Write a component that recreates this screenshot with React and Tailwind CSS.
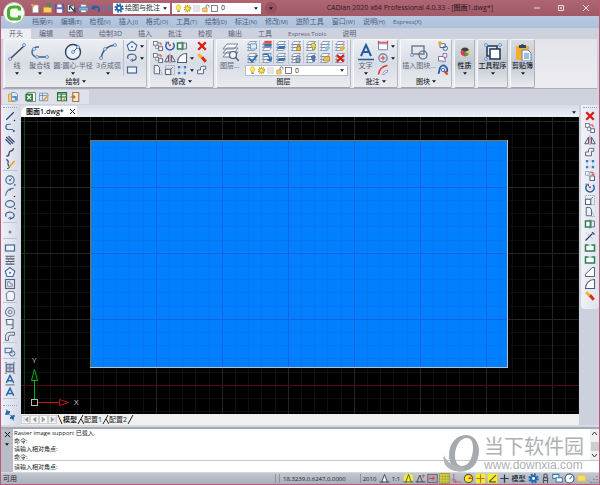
import React from "react";

const S = "#4a6696";
const D = "#30446e";

const ICONS = {
  line: <><path d="M3 13 13 3" stroke={D} strokeWidth="1.600" /><circle cx="14" cy="14" r="1" fill="#222" stroke="none" /></>,
  pline: <><path d="M9 3H6a3.500 3.500 0 0 0 0 7h6" stroke={S} strokeWidth="1.600" /><circle cx="13" cy="12" r="1.400" fill={D} stroke="none" /></>,
  mline: <path d="M3 4l9 9M6 3l8 8M2 7l7 7" stroke={D} strokeWidth="1.500" />,
  spline: <path d="M3 13c5 2 3-5 5-6s3 1 5-4" stroke={D} strokeWidth="1.700" />,
  sketch: <><path d="M3 2c6 2 0 5 3 8s-1 4-2 4" stroke={D} strokeWidth="1.500" /><path d="M7 12 14 4" stroke="#eda22d" strokeWidth="2.500" /></>,
  circle: <><circle cx="8" cy="8" r="5.500" stroke={S} strokeWidth="1.500" /><path d="M8 8l3-3" stroke={S} /><circle cx="8" cy="8" r="1.500" fill="#2f78d0" stroke="none" /><circle cx="14.500" cy="14.500" r="1" fill="#222" stroke="none" /></>,
  arc: <><path d="M2 13C3 7 7 3 13 3" stroke={S} strokeWidth="1.600" /><circle cx="8" cy="5" r="1.300" fill={S} stroke="none" /><circle cx="14" cy="14" r="1" fill="#222" stroke="none" /></>,
  ellipse: <><ellipse cx="8" cy="8" rx="6" ry="4.500" stroke={S} strokeWidth="1.600" /><circle cx="14.500" cy="14" r="1" fill="#222" stroke="none" /></>,
  earc: <><path d="M3 9C0 4 6 2 10 3s5 6 1 8H8" stroke={S} strokeWidth="1.700" /><path d="M9 9l-3 2 3 2" stroke={S} /></>,
  dot: <circle cx="8" cy="8" r="2" fill="#7a86a0" stroke="none" />,
  rect: <rect x="2" y="4" width="12" height="8" stroke={S} strokeWidth="1.600" fill="#eef3fb" />,
  hatch: <><path d="M2 3h12M2 6.500h12M2 10h12M2 13.500h12" stroke="#4e566a" strokeWidth="1.500" /><path d="M4 3v3M9 3v3M6 7v3M12 7v3M4 10v3M9 10v3" stroke="#777" /></>,
  polygon: <><path d="M8 2l6.500 5-2.500 7H4L1.500 7z" stroke={S} strokeWidth="1.400" fill="#edf3fc" /><circle cx="8" cy="9" r="1.300" fill="#2f78d0" stroke="none" /></>,
  region: <><rect x="2" y="2" width="12" height="12" stroke="#5a6680" strokeWidth="1.500" fill="#dde3ee" /><path d="M5 5h3v3h3v3H5z" stroke="#5a6680" fill="#fff" /></>,
  boundary: <path d="M3 5l3-3h6l2 3v6l-2 3H4z" stroke="#7483a0" strokeWidth="1.400" fill="#f4f6fa" />,
  donut: <><circle cx="8" cy="8" r="6" stroke="#6a7690" strokeWidth="1.400" /><circle cx="8" cy="8" r="2.500" stroke="#6a7690" strokeWidth="1.300" /></>,
  trace: <path d="M3 2h9v7H4zM12 9v5H9" stroke="#5f6c86" strokeWidth="1.500" fill="#eef1f7" />,
  fillet3: <path d="M2 14V9q0-6 6-6h6v4H9q-3 0-3 3v4z" stroke="#5f6c86" strokeWidth="1.300" fill="#dce1ea" />,
  block: <><rect x="1.500" y="3" width="9" height="6" stroke={S} strokeWidth="1.300" fill="#e5edf8" /><circle cx="11" cy="10" r="3.500" stroke={S} strokeWidth="1.300" /></>,
  image: <><rect x="3" y="3" width="10" height="10" stroke="#5a6680" strokeWidth="1.600" fill="#b9c3d5" /><path d="M1 1h3M12 1h3M1 15h3M12 15h3M8 3v10M3 8h10" stroke="#5a6680" /></>,
  mtext: <><path d="M3 12 8 2l5 10M5 9h6" stroke="#2c66a8" strokeWidth="2" /><path d="M2 14.500h12" stroke="#444" /></>,
  text: <path d="M3 13 8 3l5 10M5 10h6" stroke="#2c66a8" strokeWidth="2.200" />,
  refresh: <><path d="M3 8q0-4 5-4M13 8q0 4-5 4" stroke="#215fa8" strokeWidth="2.400" /><path d="M2 1v7h6zM14 15V8H8z" fill="#2469b4" transform="rotate(12 8 8)" /></>,
  x: <path d="M3 3l10 10M13 3 3 13" stroke="#e01a12" strokeWidth="3.200" />,
  copy: <><rect x="2" y="2" width="5" height="5" stroke="#66738c" strokeWidth="1.200" fill="#fff" /><path d="M8 4h4v3" stroke="#d83c30" strokeWidth="1.300" /><rect x="5" y="7" width="4" height="4" stroke="#66738c" fill="#fff" /><rect x="9" y="9" width="5" height="5" stroke="#526382" strokeWidth="1.200" fill="#fff" /></>,
  move: <><path d="M2 2h5v5H2z" stroke="#8d99ae" /><path d="M8 3h4v3M10 5l2 2 2-2" stroke="#d83c30" strokeWidth="1.300" /><rect x="8" y="8" width="6" height="6" stroke="#526382" strokeWidth="1.300" fill="#fff" /></>,
  mirror: <><path d="M6 4v9H1zM10 4v9h5z" stroke="#4d5b78" strokeWidth="1.300" fill="#dfe4ee" /><path d="M8 2v13" stroke="#d83c30" /></>,
  offset: <path d="M2 13V8h4V5q0-2 3-2h4v4h-3v6z" stroke="#5b6780" strokeWidth="1.300" fill="#edf0f5" />,
  array: <><path d="M4 4h8v8H4z" stroke="#b8c4d8" /><path d="M2.500 2.500h3v3h-3zM10.500 2.500h3v3h-3zM2.500 10.500h3v3h-3zM10.500 10.500h3v3h-3z" fill="#347bc9" stroke="none" /></>,
  rotate: <><path d="M4 4a5.500 5.500 0 1 0 8 0" stroke="#2b67ac" strokeWidth="2.200" /><path d="M2 3h4v3" stroke="#2b67ac" strokeWidth="1.400" /><circle cx="8" cy="7" r="1.500" fill="#e03a30" stroke="none" /></>,
  scale: <><path d="M2 2h12v12H2z" stroke="#8c99ae" strokeDasharray="2 1" /><rect x="2" y="7" width="7" height="7" stroke="#5b6780" strokeWidth="1.500" fill="#fff" /><path d="M9 7l3-3" stroke="#5b6780" /></>,
  stretch: <><path d="M3 2h5l2 3v8H3z" stroke="#5b6780" strokeWidth="1.300" fill="#eef1f6" /><path d="M11 8l3 6H9" stroke="#8c99ae" strokeDasharray="2 1" /></>,
  lengthen: <><rect x="2" y="4" width="7" height="8" stroke="#2d8050" strokeWidth="2" fill="#fff" /><path d="M8 2v12M9 4h5v8H9" stroke="#66738c" strokeWidth="1.300" /></>,
  trim: <><path d="M2 14 8 8l3-3M11 3l3 3" stroke="#343e56" strokeWidth="1.600" /><path d="M3 4l9 8" stroke="#8c99ae" strokeDasharray="2 1" /></>,
  brk: <><rect x="2" y="4" width="12" height="8" stroke="#2d8050" strokeWidth="2" fill="#fff" /><path d="M6 4h4" stroke="#eef" strokeWidth="2" /></>,
  chamfer: <path d="M2 14V11l9-9h3v12z" stroke="#4d5b78" strokeWidth="1.300" fill="#fff" />,
  fillet: <path d="M2 14C2 7 7 2 14 2v12z" stroke="#4d5b78" strokeWidth="1.400" fill="#fff" />,
  brush: <><path d="M3 3l5 5" stroke="#f2b522" strokeWidth="4" /><path d="M8 7l5 6" stroke="#d92a1c" strokeWidth="4" /></>,
  newf: <><path d="M4 3h8v11H4z" stroke="#a7b0bf" fill="#fff" /><path d="M2 2l4 3" stroke="#f4a21d" strokeWidth="3" /></>,
  open: <><path d="M2 6h12v8H2z" stroke="#c38a1c" fill="#f7cf68" /><path d="M7 2h5v5" stroke="#33906a" strokeWidth="2.500" /></>,
  save: <><path d="M2 2h12v12H2z" stroke="#5b4a98" fill="#7465b5" /><path d="M5 2h6v4H5zM4 9h8v5H4z" fill="#fff" stroke="none" /></>,
  pick: <><path d="M2 2h10v11H2z" stroke="#474d60" fill="#f4f4f8" /><path d="M5 4l7 8M5 4v6M5 4h6M13 7v7" stroke="#343a52" strokeWidth="1.700" /></>,
  print: <><path d="M4 2h8v4H4z" stroke="#778" fill="#fff" /><path d="M1 6h14v6H1z" stroke="#3b6dac" fill="#7fb0e2" /><path d="M4 10h8v4H4z" stroke="#667" fill="#fff" /></>,
  undo: <><path d="M4 7c8-4 11 1 8 6" stroke="#1d60b4" strokeWidth="2.600" /><path d="M1 8l5-6 1 8z" fill="#1d60b4" /></>,
  redo: <><path d="M12 7C4 3 1 8 4 13" stroke="#5f79aa" strokeWidth="2.400" /><path d="M15 8l-5-6-1 8z" fill="#5f79aa" /></>,
  gear: <><circle cx="8" cy="8" r="6" stroke="#2168b5" strokeWidth="3" strokeDasharray="2.600 2.100" /><circle cx="8" cy="8" r="3.600" stroke="#2168b5" strokeWidth="3" fill="#fff" /></>,
  bulb: <><path d="M8 1.500a4.500 4.500 0 0 1 2.500 8V11h-5V9.500a4.500 4.500 0 0 1 2.500-8z" fill="#ffec58" stroke="#c7a324" /><path d="M6 13h4" stroke="#667" strokeWidth="2" /></>,
  sun: <><circle cx="8" cy="8" r="5.500" stroke="#b99a17" strokeWidth="2.500" strokeDasharray="2 1.450" /><circle cx="8" cy="8" r="3.500" fill="#fff066" stroke="#b29013" strokeWidth="1.400" /></>,
  pale: <rect x="3" y="3" width="10" height="10" fill="#e4e5ea" stroke="#cfd2da" />,
  lock: <><path d="M9 7V4q0-2.500 2.500-2.500T14 4v2" stroke="#4c5c88" strokeWidth="1.500" /><path d="M3 7h8v7H3z" fill="#f2ce68" stroke="#b98a2a" /></>,
  box: <rect x="2.500" y="2.500" width="11" height="11" fill="#fff" stroke="#555" strokeWidth="1.300" />,
  excel: <><path d="M3 2h11v12H3z" fill="#fff" stroke="#477b50" /><path d="M1 4h9v9H1z" fill="#39864a" stroke="#256936" /><path d="M3 6l5 5M8 6l-5 5" stroke="#fff" strokeWidth="1.500" /></>,
  sheetEdit: <><path d="M2 3h11v10H2z" fill="#d8e7f8" stroke="#668bb5" /><path d="M2 6h11M6 3v10" stroke="#668bb5" /><path d="M7 13l7-8" stroke="#eda22d" strokeWidth="2.500" /></>,
  sheet: <><path d="M2 2h12v11H2z" fill="#dceedd" stroke="#2b6f3d" strokeWidth="1.500" /><path d="M2 4h12M2 8h12M7 3v10" stroke="#2b6f3d" strokeWidth="1.500" /><path d="M8 14l4-4" stroke="#d84" strokeWidth="2" /></>,
  door: <><path d="M5 2h8v12H5z" fill="#f4ead8" stroke="#ac743b" strokeWidth="1.500" /><path d="M2 8h6M6 6l2 2-2 2" stroke="#ac743b" strokeWidth="1.500" /></>,
  docs: <><path d="M2 4h9v10H2z" fill="#f8cd67" stroke="#c69535" /><path d="M6 2h5l3 3v8H6z" fill="#dceafa" stroke="#5d88bb" /><path d="M7 8h5v4" stroke="#3275bc" strokeWidth="2" /></>,
  dimh: <><path d="M2 5h12v8H2z" stroke="#7387aa" strokeWidth="1.300" fill="#fff" /><path d="M2 3h12M2 1v4M14 1v4" stroke="#dc3d36" strokeWidth="1.500" /></>,
  center: <><circle cx="8" cy="8" r="5.500" stroke="#6078a0" strokeWidth="1.500" /><path d="M8 5v6M5 8h6" stroke="#dc3d36" strokeWidth="1.400" /></>,
  dimarc: <><path d="M2 14C3 7 7 3 14 2" stroke="#dc3d36" strokeWidth="2" /><path d="M7 14q1-5 7-6v3q-4 0-4 3z" stroke="#7387aa" fill="#fff" /></>,
  blockNew: <><path d="M4 5h7v5H4z" stroke={S} fill="#fff" strokeWidth="1.300" /><circle cx="11" cy="11" r="3" stroke={S} strokeWidth="1.300" /><circle cx="4" cy="4" r="2.500" fill="#f4a51d" stroke="none" /></>,
  blockEdit: <><path d="M2 6h8v6H2z" stroke="#6577a0" fill="#fff" strokeWidth="1.300" /><path d="M8 2h5v5H8zM11 8v5H7" stroke="#8260a8" fill="#eee3f6" /></>,
  attr: <><path d="M2 13 4 5q3-5 7-2t2 8" stroke="#245ca0" strokeWidth="2.400" /><circle cx="8" cy="8" r="2.200" fill="#fff" stroke="#3175c6" strokeWidth="1.300" /><path d="M9 9l5 5" stroke="#df3b1f" strokeWidth="2.500" /></>,
  ann: <><path d="M8 2l4 11H4z" stroke="#404858" strokeWidth="1.400" fill="#f5f5f5" /><path d="M1 13h4M11 13h4" stroke="#404858" strokeWidth="1.600" /></>,
  annY: <><circle cx="8" cy="8" r="7" fill="#f6ee36" stroke="none" /><path d="M8 2l4 11H4zM1 13h4M11 13h4" stroke="#555b35" strokeWidth="1.400" /></>,
  annR: <><path d="M7 3l4 10H3zM1 13h3M11 13h4" stroke="#404858" strokeWidth="1.400" /><path d="M12 2v5M10 4h5" stroke="#d65245" strokeWidth="1.500" /></>,
  snap: <><rect x="1" y="2" width="14" height="12" fill="#a6a6b4" stroke="#696978" strokeWidth="1.500" /><path d="M3 8h8M9 5v6" stroke="#dc3d46" strokeWidth="1.500" /></>,
  grid: <><rect x="1" y="1" width="14" height="14" fill="#d9d83e" stroke="#8b8a35" /><path d="M5 1v14M9 1v14M13 1v14M1 5h14M1 9h14M1 13h14" stroke="#8b8a35" strokeWidth=".7" /></>,
  ortho: <path d="M4 1v12h11M1 10h6v5" stroke="#c45b66" strokeWidth="1.300" />,
  polar: <><circle cx="8" cy="8" r="6" fill="#f8ec28" stroke="#655c24" strokeWidth="1.600" /><path d="M8 8l5-4M8 8h6" stroke="#cf3e27" strokeWidth="1.400" /></>,
  osnap: <><rect x="1" y="1" width="14" height="14" fill="#f8ec28" stroke="none" /><path d="M8 2v12M2 8h12" stroke="#b5742a" strokeWidth="1.700" /></>,
  otrack: <><rect x="1" y="1" width="14" height="14" fill="#f8ec28" stroke="none" /><path d="M3 13 13 3M3 13h10" stroke="#5b5627" strokeWidth="1.700" /></>,
  plus: <path d="M8 2v12M2 8h12" stroke="#303744" strokeWidth="1.800" />,
  person: <><circle cx="8" cy="4" r="2.500" stroke="#444d60" strokeWidth="1.500" /><path d="M5 7h6v4H5zM5 15v-4M11 15v-4" stroke="#444d60" strokeWidth="1.500" /></>,
  windows: <><path d="M1 2h9v6H1z" fill="#e4f0fc" stroke="#3d78b5" strokeWidth="1.500" /><path d="M6 7h9v6H6z" fill="#fff" stroke="#3d78b5" strokeWidth="1.500" /></>,
  clock: <><circle cx="8" cy="8" r="6.500" fill="#fff" stroke="#3c4c68" strokeWidth="1.500" /><path d="M8 9l4-5" stroke="#3575b8" strokeWidth="1.500" /></>,
  folder: <path d="M2 3h12v9H2z" fill="#f7d869" stroke="#dfb94c" />,
};

function Layer({ mark }) {
  return (
    <svg viewBox="0 0 16 16" width="12" height="12" fill="none" aria-hidden="true">
      <path d="M5 2h9l-3 4H2zM5 6h9l-3 4H2zM5 10h9l-3 4H2z" fill="#f5f8fc" stroke="#72839d" />
      {mark === "panel" && <path d="M6 5h8v7H6z" fill="#dcebfa" stroke="#4688cc" />}
      {mark === "red" && <><path d="M5 1h9v4H4z" fill="#d65347" /><path d="M5 5h9v4H4z" fill="#3d71ac" /></>}
      {mark === "blue" && <path d="M5 8h9l-2 4H3z" fill="#3277bd" />}
      {mark === "lock" && <path d="M9 9h5v5H9zM10 9V7h3v2" fill="#f1bb4b" stroke="#a2771e" />}
      {mark === "bulb" && <path d="M11 4q3 0 3 3l-1 3v3h-3v-3L8 7q0-3 3-3z" fill="#f5dd42" stroke="#8b7d37" />}
      {mark === "snow" && <circle cx="11" cy="11" r="3" fill="#90c5f3" />}
      {mark === "sun" && <circle cx="11" cy="11" r="3" fill="#f3b32e" />}
      {mark === "check" && <path d="M4 8l4 5 7-9" stroke="#2c6fba" strokeWidth="2.500" />}
      {mark === "swap" && <path d="M2 3h7l4 9M8 10l5 2 1-5" stroke="#2c6fba" strokeWidth="2" />}
      {mark === "unlock" && <path d="M8 8h5v6H8zM8 7q1-4 5-1" fill="#9aa9bd" stroke="#526580" />}
      {mark === "bulbOff" && <path d="M11 4q3 0 3 3l-1 6h-3L8 7q0-3 3-3z" fill="#4d77a6" />}
      {mark === "warm" && <path d="M7 6h7v6H6z" fill="#f0be50" stroke="#bb852a" />}
      {mark === "x" && <path d="M4 4l9 9M13 4l-9 9" stroke="#e01a12" strokeWidth="3" />}
    </svg>
  );
}

function Icon({ name, size = 12 }) {
  return (
    <svg viewBox="0 0 16 16" width={size} height={size} fill="none" className="shrink-0" aria-hidden="true">
      {ICONS[name]}
    </svg>
  );
}

function IconButton({ name, size }) {
  return (
    <button type="button" aria-label={name} className="flex h-3 w-3 shrink-0 items-center justify-center">
      <Icon name={name} size={size} />
    </button>
  );
}

function Caret() {
  return (
    <svg viewBox="0 0 6 4" width="4" height="3" className="shrink-0" aria-hidden="true">
      <path d="M0 0h6L3 4z" fill="#15181f" />
    </svg>
  );
}

const BIG = {
  line: <><path d="M3 15 16 3" stroke="#34425f" strokeWidth="1.400" /><Nodes at={[[2, 16], [16, 2]]} /></>,
  pline: <><path d="M8 4H6a5 5 0 0 0 0 10h10" stroke="#4a5d80" strokeWidth="1.400" /><Nodes at={[[3, 6], [6, 14], [16, 14]]} /></>,
  circle: <><circle cx="9" cy="9" r="7.500" stroke="#34425f" strokeWidth="1.400" fill="#eaf1fa" /><path d="M9 9l5-5" stroke="#44516f" /><Nodes at={[[9, 9], [14, 4]]} /></>,
  arc: <><path d="M2 16C3 9 7 3 16 2" stroke="#4a5d80" strokeWidth="1.500" /><Nodes at={[[2, 15], [6, 6], [16, 2]]} /></>,
  layers: <><path d="M6 1h11l-4 5H2zM6 5h11l-4 5H2zM6 9h11l-4 5H2z" fill="#fafbfd" stroke="#77839a" /><circle cx="12" cy="12" r="3.500" fill="#eef5fd" stroke="#4f607c" strokeWidth="1.200" /><path d="M14 14l4 4" stroke="#4f607c" strokeWidth="1.500" /></>,
  text: <><path d="M4 13 9 2l5 11M6 9h6" stroke="#245d9f" strokeWidth="2" /><path d="M1 16.500h16" stroke="#245d9f" strokeWidth="1.500" /></>,
  insert: <><rect x="2" y="3" width="12" height="8" stroke="#536684" strokeWidth="1.200" /><circle cx="13" cy="12" r="4" stroke="#536684" strokeWidth="1.200" /><Nodes at={[[2, 12]]} /></>,
  ball: <><circle cx="9" cy="9" r="4.500" fill="#f6c63b" /><path d="M9 9 5 7a4.500 4.500 0 0 1 8 0z" fill="#333f63" /><path d="M9 9 5 7a4.500 4.500 0 0 0 4 6.500z" fill="#d83d5d" /><path d="M9 9v4.500a4.500 4.500 0 0 0 4-2.500z" fill="#3ca05b" /></>,
  tools: <><rect x="3" y="3" width="10" height="10" stroke="#293d5e" strokeWidth="1.600" fill="#dfe8f3" /><rect x="6" y="6" width="10" height="10" stroke="#293d5e" strokeWidth="1.600" fill="#fff" /><Nodes at={[[2, 2], [16, 2], [2, 16]]} /></>,
  paste: <><rect x="2" y="3" width="13" height="14" rx="1" fill="#f0ae32" /><path d="M5 5V2h2q1-2 3 0h2v3z" fill="#374660" /><path d="M8 7h6l3 3v8H8z" fill="#edf5fd" stroke="#6387b0" /><path d="M10 11h5M10 13h5M10 15h5" stroke="#5284bb" /></>,
};

function Nodes({ at }) {
  return at.map(([x, y]) => <circle key={x + "-" + y} cx={x} cy={y} r="1.500" fill="#d7e9fb" stroke="#5588c2" strokeWidth=".8" />);
}

function BigButton({ name, label, caret = true, dark }) {
  return (
    <button type="button" className="flex shrink-0 flex-col items-center whitespace-nowrap pt-[3px]">
      <svg viewBox="0 0 18 18" width="18" height="18" fill="none" aria-hidden="true">{BIG[name]}</svg>
      <span className={"h-[10px] leading-[10px] " + (dark ? "font-medium text-[#20242e]" : "text-[#5f6577]")}>{label}</span>
      {caret && <span className="flex h-1 items-center"><Caret /></span>}
    </button>
  );
}

function Panel({ title, caret, className, children }) {
  return (
    <section className={"flex shrink-0 flex-col rounded-[2px] border border-t-[#f7f8fb] border-r-[#b4b8c2] border-b-[#a3a7b1] border-l-[#f7f8fb] bg-linear-to-b from-[#eceef2] via-[#d8dce4] to-[#eaebef] " + className}>
      <div className="flex h-[36px]">{children}</div>
      <h2 className="flex h-[11px] items-center justify-center gap-[2px] font-medium text-[#2d313b]">
        {title}{caret && <Caret />}
      </h2>
    </section>
  );
}

function ShortPanel({ name, label, className }) {
  return (
    <section className={"flex shrink-0 justify-center rounded-[2px] border border-t-[#f1f2f5] border-r-[#aeb2bb] border-b-[#a3a7b1] border-l-[#f7f8fb] bg-linear-to-b from-[#d9dce2] via-[#c1c7d1] to-[#eaebef] " + className}>
      <BigButton name={name} label={label} dark />
    </section>
  );
}

function IconRow({ name, caret }) {
  return (
    <button type="button" aria-label={name} className="flex h-3 items-center gap-[2px]">
      <Icon name={name} />{caret && <Caret />}
    </button>
  );
}

const MENUS = [["档案", "(F)"], ["编辑", "(E)"], ["检视", "(V)"], ["插入", "(I)"], ["格式", "(O)"], ["工具", "(T)"], ["绘制", "(D)"], ["标注", "(N)"], ["修改", "(M)"], ["进阶工具", ""], ["窗口", "(W)"], ["说明", "(H)"], ["", "Express(X)"]];
const TABS = ["开头", "编辑", "绘图", "绘制3D", "插入", "批注", "检视", "输出", "工具", "Express Tools", "说明"];
const LAYER_MARKS = ["panel", "red", "blue", "lock", "bulb", "snow", "sun", "check", "swap", "blue", "unlock", "bulbOff", "warm", "x"];
const LEFT = [
  ["line", "pline", "mline", "spline", "sketch"],
  ["circle", "arc", "ellipse", "earc"],
  ["dot"],
  ["rect", "hatch", "polygon", "region", "boundary"],
  ["donut", "trace", "fillet3"],
  ["block"],
  ["image", "mtext", "text"],
];
const RIGHT = ["x", "copy", "mirror", "offset", "array", "move", "rotate", "scale", "stretch", "lengthen", "trim", "brk", "brk", "chamfer", "fillet", "brush"];

function LayerSelect({ className }) {
  return (
    <div className={"flex items-center bg-white pl-[2px] pr-[3px] " + className}>
      <Icon name="bulb" size={9} /><Icon name="sun" size={9} /><Icon name="pale" size={9} /><Icon name="lock" size={9} /><Icon name="box" size={9} />
      <select aria-label="图层" className="min-w-0 flex-1 appearance-none pl-[2px] text-[#222] outline-none"><option>0</option></select>
      <Caret />
    </div>
  );
}

function TitleBar() {
  return (
    <header className="flex h-4 shrink-0 items-center bg-linear-to-b from-[#ad6672] to-[#a15867] pl-7">
      {["newf", "open", "save", "pick", "print", "undo", "redo"].map((n) => <IconButton key={n} name={n} size={11} />)}
      <div className="flex h-[11px] w-[57px] shrink-0 items-center bg-white pl-px pr-[3px]">
        <Icon name="gear" size={10} />
        <select aria-label="工作空间" className="min-w-0 flex-1 appearance-none pl-px text-[#252a36] outline-none"><option>绘图与批注</option></select>
        <Caret />
      </div>
      <LayerSelect className="ml-[2px] h-[11px] w-[89px] shrink-0" />
      <button type="button" aria-label="更多" className="ml-1 flex h-3 w-3 items-center justify-center rounded-full bg-[#985160]"><Caret /></button>
      <h1 className="min-w-0 flex-1 whitespace-nowrap pr-8 text-right font-medium text-[#301b24]">CADian 2020 x64 Professional 4.0.33 - [图面1.dwg*]</h1>
      <div className="flex text-white">
        <button type="button" aria-label="最小化" className="flex h-4 w-[24px] items-center justify-center"><svg width="8" height="8"><path d="M1 4h6" stroke="#f4dde1" /></svg></button>
        <button type="button" aria-label="还原" className="flex h-4 w-[24px] items-center justify-center"><svg width="8" height="8" fill="none"><path d="M1.500 1.500h5v5h-5zM3.500 3.500h1v1h-1z" stroke="#f4dde1" /></svg></button>
        <button type="button" aria-label="关闭" className="flex h-4 w-[26px] items-center justify-center"><svg width="8" height="8"><path d="M1 1l6 6M7 1 1 7" stroke="#f4dde1" /></svg></button>
      </div>
    </header>
  );
}

function Ribbon() {
  return (
    <div className="mx-[2px] flex h-[50px] shrink-0 gap-[2px] border-b border-[#a9adb8] bg-linear-to-b from-[#e3e4ea] to-[#ececf0] pl-px">
      <Panel title="绘制" caret className="w-[143px]">
        <div className="flex flex-1 justify-between pl-[3px] pr-[2px]">
          <BigButton name="line" label="线" />
          <BigButton name="pline" label="聚合线" />
          <BigButton name="circle" label="圆:圆心-半径" />
          <BigButton name="arc" label="3点成弧" />
        </div>
        <div className="flex w-[23px] flex-col border-l border-[#b9bec9] pl-[2px]">
          <IconRow name="polygon" caret /><IconRow name="earc" caret /><IconRow name="rect" />
        </div>
      </Panel>
      <Panel title="修改" caret className="w-[65px]">
        <div className="grid flex-1 grid-cols-[12px_12px_18px] content-start pl-[2px]">
          <IconRow name="copy" /><IconRow name="rotate" /><IconRow name="lengthen" />
          <IconRow name="copy" /><IconRow name="mirror" /><IconRow name="fillet" caret />
          <IconRow name="stretch" /><IconRow name="scale" /><IconRow name="array" caret />
        </div>
        <div className="w-[17px]"><IconRow name="x" /><IconRow name="brush" /><IconRow name="offset" /></div>
      </Panel>
      <Panel title="图层" className="w-[135px]">
        <div className="w-[28px] pl-[3px]"><BigButton name="layers" label="图层..." caret={false} /></div>
        <div className="flex-1 pr-[2px]">
          <div className="grid grid-cols-7">
            {LAYER_MARKS.map((m, i) => <button key={i} type="button" aria-label={"图层 " + m} className="flex h-3 items-center justify-center border-r border-[#c3c9d4]"><Layer mark={m} /></button>)}
          </div>
          <LayerSelect className="mt-px h-[11px] border border-[#b3bac8]" />
        </div>
      </Panel>
      <Panel title="批注" caret className="w-[45px]">
        <div className="flex flex-1 justify-center"><BigButton name="text" label="文字" /></div>
        <div className="w-[20px]"><IconRow name="dimh" caret /><IconRow name="center" caret /><IconRow name="dimarc" /></div>
      </Panel>
      <Panel title="图块" caret className="w-[52px]">
        <div className="flex flex-1 justify-center"><BigButton name="insert" label="插入图块..." caret={false} /></div>
        <div className="w-[14px]"><IconRow name="blockNew" /><IconRow name="blockEdit" /><IconRow name="attr" /></div>
      </Panel>
      <ShortPanel name="ball" label="性质" className="w-[21px]" />
      <ShortPanel name="tools" label="工具程序" className="w-[31px]" />
      <ShortPanel name="paste" label="剪贴簿" className="w-[25px]" />
    </div>
  );
}

function Drawing() {
  return (
    <svg className="block min-h-0 w-full flex-1 bg-black" role="img" aria-label="图面">
      <defs>
        <pattern id="grid" x="3" y="4" width="66" height="66" patternUnits="userSpaceOnUse">
          <path d="M13.500 0v66M26.500 0v66M39.500 0v66M53.500 0v66M0 13.500h66M0 26.500h66M0 39.500h66M0 53.500h66" stroke="#0e0e0e" />
          <path d="M.5 0v66M0 .5h66" stroke="#252525" />
        </pattern>
        <pattern id="blueGrid" x="3" y="4" width="66" height="66" patternUnits="userSpaceOnUse">
          <path d="M13.500 0v66M26.500 0v66M39.500 0v66M53.500 0v66M0 13.500h66M0 26.500h66M0 39.500h66M0 53.500h66" stroke="#0878f2" />
          <path d="M.5 0v66M0 .5h66" stroke="#1464e2" />
        </pattern>
      </defs>
      <rect width="100%" height="100%" fill="url(#grid)" />
      <path d="M3.500 0v268" stroke="#0a4a12" />
      <path d="M0 268.500h557" stroke="#4e0b0b" />
      <rect x="69" y="23" width="418" height="228" fill="#0080ff" />
      <rect x="69" y="23" width="418" height="228" fill="url(#blueGrid)" />
      <path d="M69.500 251V23.500H487" stroke="#85743f" fill="none" />
      <path d="M486.500 23v228M69 250.500h418" stroke="#b9c0c4" fill="none" />
      <path d="M13.500 282V264" stroke="#00b515" />
      <path d="M10.500 263.500h6l-3-11z" stroke="#00b515" fill="none" />
      <path d="M16 285.500h22" stroke="#c01414" />
      <path d="M38.500 282.500v6l9-3z" stroke="#c01414" fill="none" />
      <rect x="10.500" y="282.500" width="6" height="6" stroke="#b8b8b8" fill="none" />
      <text x="11" y="246" fontSize="8" fill="#c4c4c4">Y</text>
      <text x="53" y="288" fontSize="8" fill="#c4c4c4">X</text>
    </svg>
  );
}

function LayoutTabs() {
  return (
    <nav className="flex h-[11px] shrink-0 items-center bg-[#f0f0f0] text-[#1d1f25]">
      {["M2 1v5M6 1 3 3.500 6 6z", "M5 1 2 3.500 5 6z", "M2 1l3 2.500L2 6z", "M6 1v5M2 1l3 2.500L2 6z"].map((d) => (
        <button key={d} type="button" aria-label="切换配置" className="flex h-[9px] w-[9px] items-center justify-center border border-[#d0d0d0] bg-[#f6f6f6]"><svg width="8" height="7"><path d={d} fill="#999" stroke="#999" strokeWidth=".5" /></svg></button>
      ))}
      <svg width="6" height="9"><path d="M1 0l4 9" stroke="#222" /></svg>
      <a href="#model" className="font-bold">模型</a>
      <svg width="7" height="9"><path d="M6 0 1 9M4 4l3 5" stroke="#222" /></svg>
      <a href="#layout1">配置1</a>
      <svg width="7" height="9"><path d="M6 0 1 9M4 4l3 5" stroke="#222" /></svg>
      <a href="#layout2">配置2</a>
      <svg width="7" height="9"><path d="M6 0 1 9" stroke="#222" /></svg>
    </nav>
  );
}

function CommandLine() {
  return (
    <section className="flex h-[43px] shrink-0 bg-white text-[6px] text-[#15171c]">
      <div className="flex w-3 shrink-0 flex-col items-center gap-[6px] bg-[#b8bdc8] pt-[3px]">
        <button type="button" aria-label="关闭"><svg width="5" height="5" className="block"><path d="M0 0l5 5M5 0 0 5" stroke="#111" /></svg></button>
        <Caret />
      </div>
      <div className="flex min-w-0 flex-1 flex-col pl-px">
        <div className="flex h-[31px]">
          <div className="flex-1 leading-[8px]">
            <p className="h-2">Raster image support 已载入.</p><p className="h-2">命令:</p><p className="h-2">请输入相对角点:</p><p className="h-2">命令:</p>
          </div>
          <div className="flex w-[9px] flex-col items-center justify-between bg-[#f0f0f0] py-[2px]">
            <svg width="5" height="4" fill="none"><path d="M0 4l2.500-3L5 4" stroke="#333" /></svg>
            <div className="mt-1 h-[9px] w-[8px] bg-[#cdcdcd]" />
            <svg width="5" height="4" fill="none"><path d="M0 0l2.500 3L5 0" stroke="#333" /></svg>
          </div>
        </div>
        <input aria-label="命令" defaultValue="请输入相对角点:" className="h-3 w-full border-t border-[#c8c8c8] outline-none" />
      </div>
    </section>
  );
}

function StatusBar() {
  return (
    <footer className="flex h-3 shrink-0 items-center border-t border-[#d3d7de] bg-linear-to-b from-[#c3c8d0] to-[#a9b0ba] text-[#20242c]">
      <span className="flex-1 pl-[2px]">可用</span>
      <span className="mr-[3px] h-[9px] w-px bg-[#8d939e]" />
      <span className="h-[9px] w-px bg-[#8d939e]" />
      <span className="w-[80px] shrink-0 whitespace-nowrap pl-[3px] text-[6px] font-medium">18.3239,0.6247,0.0000</span>
      <span className="h-[9px] w-px bg-[#8d939e]" />
      <button type="button" className="w-[17px] text-[6px]">2010</button>
      <IconButton name="ann" size={11} />
      <button type="button" className="w-3 text-[6px]">1:1</button>
      {["annY", "annR", "snap", "grid", "ortho", "polar", "osnap", "otrack", "plus"].map((n) => <IconButton key={n} name={n} size={11} />)}
      <button type="button" className="w-[17px] font-medium">模型</button>
      {["gear", "person", "windows", "clock", "folder"].map((n) => <IconButton key={n} name={n} size={11} />)}
      <svg width="12" height="10"><path d="M10 2v1M10 5v1M10 8v1M7 5v1M7 8v1M4 8v1" stroke="#7c828d" strokeWidth="1.500" /></svg>
    </footer>
  );
}

export default function App() {
  return (
    <div className="relative flex h-screen flex-col overflow-hidden border-x border-b border-[#b85b78] bg-[#cfd3de] font-['Open_Sans','Noto_Sans_CJK_SC',sans-serif] text-[7px] leading-[8px]">
      <TitleBar />
      <nav className="flex h-3 shrink-0 items-center gap-2 whitespace-nowrap bg-linear-to-b from-[#b9c9df] to-[#abc1db] pl-[31px] text-[#4f5c7c]">
        {MENUS.map(([zh, key]) => <a key={zh + key} href="#menu" className="shrink-0">{zh}<span className="text-[6px]">{key}</span></a>)}
      </nav>
      <div className="flex h-[11px] shrink-0 items-end whitespace-nowrap bg-[#cdd1de] text-[#5a6075]">
        {TABS.map((t, i) => (
          <button key={t} type="button" className={"h-[10px] shrink-0 px-2 " + (i === 0 ? "bg-[#eceef3]" : "") + (t === "Express Tools" ? " text-[6px]" : "")}>{t}</button>
        ))}
      </div>
      <Ribbon />
      <div className="flex h-4 shrink-0 items-center bg-[#cfd2dd]">
        <div className="ml-px flex h-[14px] items-center gap-px bg-[#dfe2ea] pl-[5px] pr-[8px]">
          <IconButton name="docs" size={12} /><span className="mx-[2px]" />
          <IconButton name="excel" size={12} /><IconButton name="sheetEdit" size={12} /><span className="mx-[2px]" />
          <IconButton name="sheet" size={12} /><IconButton name="door" size={12} />
        </div>
      </div>
      <div className="flex min-h-0 flex-1">
        <aside className="flex w-[20px] shrink-0 flex-col bg-linear-to-r from-[#edf1f7] to-[#d3d9e6] pl-[2px] pt-[2px]">
          <div className="mb-[2px] w-[14px] shrink-0 border-t border-dotted border-[#9aa5b8]" />
          {LEFT.map((group, i) => (
            <div key={i} className="mb-[3px] flex w-[14px] shrink-0 flex-col items-center border-b border-[#bcc5d3]">
              {group.map((n) => <IconButton key={n} name={n} size={12} />)}
            </div>
          ))}
          <div className="mt-[3px] flex w-[14px] shrink-0 justify-center border-t border-dotted border-[#9aa5b8] pt-[3px]"><IconButton name="refresh" size={12} /></div>
        </aside>
        <main className="flex min-w-0 flex-1 flex-col">
          <div className="flex h-3 shrink-0 items-end bg-linear-to-b from-[#d6dae5] to-[#eceff5] pr-[3px]">
            <div className="flex h-[11px] w-[56px] items-center justify-between rounded-tl-lg bg-white pl-[5px] pr-[2px]">
              <span className="font-semibold text-[#15171c]">图面1.dwg*</span>
              <button type="button" aria-label="关闭图面"><svg width="5" height="5" className="block"><path d="M0 0l5 5M5 0 0 5" stroke="#222" /></svg></button>
            </div>
            <button type="button" aria-label="图面列表" className="ml-auto flex h-[9px] items-center"><Caret /></button>
          </div>
          <Drawing />
          <LayoutTabs />
        </main>
        <aside className="w-[20px] shrink-0 bg-[#cdd1de] pl-[2px]">
          <div className="flex flex-col items-center rounded-b-sm bg-linear-to-r from-[#f0f2f7] to-[#dfe3ec] pb-[7px] pt-[2px]">
            <div className="mb-[2px] w-[14px] border-t border-dotted border-[#9aa5b8]" />
            {RIGHT.map((n, i) => <IconButton key={i} name={n} size={12} />)}
          </div>
        </aside>
      </div>
      <div className="h-1 shrink-0 border-b-2 border-[#a5a9b5] bg-[#d5d9e2]" />
      <CommandLine />
      <StatusBar />
      <div className="absolute left-[2px] top-[2px] flex h-[22px] w-[22px] items-center justify-center rounded-full border border-[#b9c4b9] bg-white">
        <svg viewBox="0 0 20 20" width="20" height="20" fill="none" aria-hidden="true">
          <circle cx="10" cy="10" r="9" fill="#f5fbef" />
          <path d="M15.500 7.500V6Q15.500 4 13.500 4H9Q4.500 4 4.500 8.500v3Q4.500 16 9 16h4.500q2 0 2-2v-1.500" stroke="#4cad35" strokeWidth="3.200" />
        </svg>
      </div>
      <div className="pointer-events-none absolute bottom-[12px] right-[15px] flex items-end gap-1 text-[#adb1b4]">
        <svg viewBox="0 0 37 38" width="37" height="38" aria-hidden="true">
          <path fillRule="evenodd" d="M23 1c8 0 13 7 13 16 0 11-7 20-16 20S6 30 6 21C6 10 13 1 23 1zm1 3c-7 0-12 8-12 18 0 6 3 10 7 10 7 0 11-9 11-18 0-6-2-10-6-10z" fill="#a6aaae" />
          <path d="M1 21c2 7 10 12 20 12l2 4C10 40-2 33 1 21z" fill="#b1b5b8" />
        </svg>
        <div>
          <div className="text-[20px] leading-[24px]">当下软件园</div>
          <div className="font-['Liberation_Sans'] text-[12px] leading-[13px]">www.downxia.com</div>
        </div>
      </div>
    </div>
  );
}
